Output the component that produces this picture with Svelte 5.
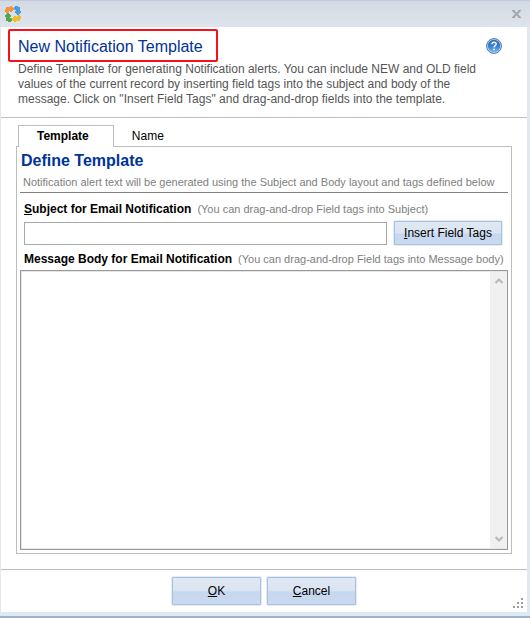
<script lang="ts">
  let activeTab = $state("template");
  let subject = $state("");
  let body = $state("");
  let templateName = $state("");

  const arrow = "M0 6V3H1V1H5V0H7V1H8V2H9V4H8V5H7V6H5V5H4V6L3 7H1V6Z";
  const arrowColors = ["#f5943f", "#469ce0", "#f0bd27", "#50aa4d"];
</script>

<div class="window">
  <header class="titlebar">
    <svg class="app-icon" viewBox="0 0 16 16" width="16" height="16" aria-hidden="true">
      {#each arrowColors as color, i}
        <path d={arrow} fill={color} transform="rotate({i * 90} 8 8)" />
      {/each}
    </svg>
    <button class="close" aria-label="Close">
      <svg viewBox="0 0 9 8" width="9" height="8">
        <path d="M1 0.5L8 7.5M8 0.5L1 7.5" stroke="#a5a9af" stroke-width="2" />
        <path d="M0 0.5H3M6 0.5H9M0 7.5H3M6 7.5H9" stroke="#a5a9af" />
      </svg>
    </button>
  </header>

  <main class="content">
    <section class="intro">
      <div class="intro-top">
        <h1>New Notification Template</h1>
        <button class="help" aria-label="Help">
          <svg viewBox="0 0 16 16" width="16" height="16">
            <defs>
              <linearGradient id="help-fill" x1="0" y1="0" x2="0" y2="1">
                <stop offset="0" stop-color="#2c68b4" />
                <stop offset="0.55" stop-color="#3d82cf" />
                <stop offset="1" stop-color="#72bbf3" />
              </linearGradient>
            </defs>
            <circle cx="8" cy="8" r="7.4" fill="#c9dcf2" stroke="#3f74b8" />
            <circle cx="8" cy="8" r="6.2" fill="url(#help-fill)" />
            <path d="M5.9 6.2C5.9 3.6 10.2 3.6 10.2 6C10.2 7.6 8 7.6 8 9.4" fill="none" stroke="#fff" stroke-width="1.4" />
            <circle cx="8" cy="11.4" r="0.9" fill="#fff" />
          </svg>
        </button>
      </div>
      <p>
        Define Template for generating Notification alerts. You can include NEW and OLD field
        values of the current record by inserting field tags into the subject and body of the
        message. Click on "Insert Field Tags" and drag-and-drop fields into the template.
      </p>
    </section>

    <div class="tabs" role="tablist">
      <button
        role="tab"
        class="tab"
        class:active={activeTab === "template"}
        aria-selected={activeTab === "template"}
        onclick={() => (activeTab = "template")}>Template</button>
      <button
        role="tab"
        class="tab"
        class:active={activeTab === "name"}
        aria-selected={activeTab === "name"}
        onclick={() => (activeTab = "name")}>Name</button>
    </div>

    <section class="panel">
      {#if activeTab === "template"}
        <h2>Define Template</h2>
        <p class="note">Notification alert text will be generated using the Subject and Body layout and tags defined below</p>

        <div class="field-label">
          <label for="subject"><u>S</u>ubject for Email Notification</label>
          <span class="hint">(You can drag-and-drop Field tags into Subject)</span>
        </div>
        <div class="subject-row">
          <input id="subject" type="text" bind:value={subject} />
          <button class="button insert"><u>I</u>nsert Field Tags</button>
        </div>

        <div class="field-label">
          <label for="body">Message Body for Email Notification</label>
          <span class="hint">(You can drag-and-drop Field tags into Message body)</span>
        </div>
        <div class="body-box">
          <textarea id="body" bind:value={body}></textarea>
          <div class="scrollbar" aria-hidden="true">
            <svg viewBox="0 0 8 6" width="8" height="6"><path d="M0.5 5L4 1.5L7.5 5" /></svg>
            <svg viewBox="0 0 8 6" width="8" height="6"><path d="M0.5 1L4 4.5L7.5 1" /></svg>
          </div>
        </div>
      {:else}
        <h2>Name</h2>
        <div class="field-label">
          <label for="name">Template Name</label>
        </div>
        <div class="subject-row">
          <input id="name" type="text" bind:value={templateName} />
        </div>
      {/if}
    </section>

    <footer class="actions">
      <button class="button"><u>O</u>K</button>
      <button class="button"><u>C</u>ancel</button>
      <svg class="grip" viewBox="0 0 10 10" width="10" height="10" aria-hidden="true">
        <path fill="#9c9c9c" d="M8 0h2v2h-2zM4 4h2v2h-2zM8 4h2v2h-2zM0 8h2v2h-2zM4 8h2v2h-2zM8 8h2v2h-2z" />
      </svg>
    </footer>
  </main>
</div>

<style>
  :global(body) {
    margin: 0;
    background: #fff;
  }

  .window {
    display: flex;
    flex-direction: column;
    box-sizing: border-box;
    min-height: 100vh;
    padding: 0 3px 4px 1px;
    border-bottom: 2px solid #a0b2c7;
    background: #e2e8f0;
    font-family: "Liberation Sans", Arial, sans-serif;
    font-size: 12px;
    color: #000;
  }

  button,
  input,
  textarea {
    font: inherit;
    color: inherit;
  }

  /* Title bar */
  .titlebar {
    display: flex;
    align-items: center;
    justify-content: space-between;
    box-sizing: border-box;
    height: 27px;
    margin: 0 -3px 0 -1px;
    padding: 0 9px 0 5px;
    border-top: 1px solid #bfcbdb;
    background: linear-gradient(#d3dae5, #dfe4ec);
  }

  .app-icon {
    display: block;
  }

  .close {
    display: flex;
    padding: 0;
    border: none;
    background: none;
  }

  .content {
    flex: 1;
    display: flex;
    flex-direction: column;
    background: #fff;
  }

  /* Intro */
  .intro {
    padding: 2px 25px 10px 7px;
    border-bottom: 1px solid #bdbdbd;
  }

  .intro-top {
    display: flex;
    justify-content: space-between;
    align-items: center;
  }

  h1 {
    margin: 0;
    padding: 5px 13px 3px 8px;
    border: 2px solid #f9101a;
    border-radius: 2px;
    font-size: 16px;
    line-height: 21px;
    font-weight: 400;
    color: #003399;
  }

  .help {
    display: flex;
    padding: 0;
    border: none;
    background: none;
  }

  .intro p {
    margin: 0 0 0 10px;
    line-height: 15px;
    color: #555;
  }

  /* Tabs */
  .tabs {
    display: flex;
    padding: 7px 0 0 17px;
  }

  .tab {
    position: relative;
    height: 21px;
    padding: 0 17px;
    border: 1px solid transparent;
    border-bottom: none;
    background: none;
  }

  .tab.active {
    padding: 0 24px 0 18px;
    border-color: #bdbdbd;
    background: #fff;
    font-weight: 700;
  }

  .tab.active::after {
    content: "";
    position: absolute;
    left: 0;
    right: 0;
    bottom: -1px;
    height: 1px;
    background: #fff;
  }

  /* Panel */
  .panel {
    flex: 1;
    display: flex;
    flex-direction: column;
    margin: 0 15px 15px;
    padding: 3px;
    border: 1px solid #bdbdbd;
  }

  h2 {
    margin: 0;
    padding-left: 1px;
    font-size: 16px;
    line-height: 21px;
    color: #003399;
  }

  .note {
    margin: 0 0 3px;
    padding: 4px 0 3px 3px;
    border-bottom: 1px solid #808080;
    font-size: 11px;
    line-height: 14px;
    color: #808080;
  }

  .field-label {
    display: flex;
    align-items: center;
    gap: 6px;
    padding: 5px 0 3px 4px;
    line-height: 16px;
  }

  .field-label label {
    font-weight: 700;
  }

  .hint {
    font-size: 11px;
    color: #808080;
  }

  .subject-row {
    display: flex;
    align-items: center;
    gap: 6px;
    padding: 0 5px 0 4px;
  }

  .subject-row input {
    flex: 1;
    box-sizing: border-box;
    min-width: 0;
    height: 23px;
    padding: 0 4px;
    border: 1px solid #a9a9a9;
    background: #fff;
  }

  .body-box {
    flex: 1;
    display: flex;
    min-height: 120px;
    border: 1px solid #999;
    box-shadow: inset 1px 1px #e6e6e6, inset 0 -1px #e6e6e6;
  }

  textarea {
    flex: 1;
    min-width: 0;
    padding: 4px;
    border: none;
    resize: none;
    background: transparent;
  }

  .scrollbar {
    display: flex;
    flex-direction: column;
    align-items: center;
    justify-content: space-between;
    width: 17px;
    margin: 1px 0;
    padding: 6px 0;
    box-sizing: border-box;
    background: #f0f0f0;
  }

  .scrollbar path {
    fill: none;
    stroke: #b9b9b9;
    stroke-width: 2;
  }

  /* Buttons */
  .button {
    width: 91px;
    height: 30px;
    padding: 0;
    border: 1px solid #e3edf9;
    border-radius: 2px;
    background: linear-gradient(#dfe8f3 0%, #dbe5f1 48%, #c7d7ee 54%, #c9d9ef 100%);
    box-shadow: inset 0 0 0 1px #a9c0da;
  }

  .button.insert {
    width: 110px;
    height: 26px;
  }

  /* Footer */
  .actions {
    position: relative;
    display: flex;
    justify-content: center;
    gap: 4px;
    padding: 6px 0;
    border-top: 1px solid #bdbdbd;
  }

  .grip {
    position: absolute;
    right: 4px;
    bottom: 4px;
  }
</style>
